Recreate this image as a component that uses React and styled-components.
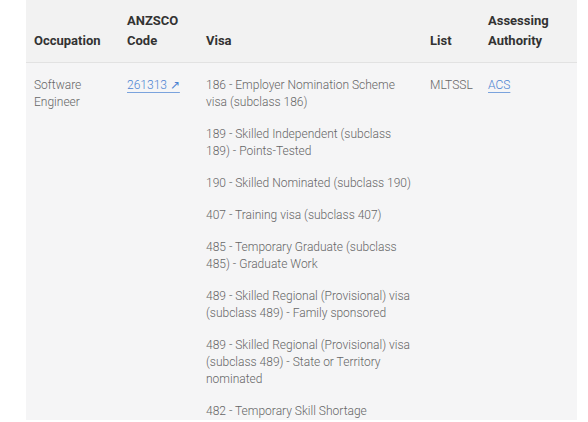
import React from "react";
import styled, { createGlobalStyle } from "styled-components";

const Global = createGlobalStyle`
  html, body { margin: 0; padding: 0; background: #fff; }
  body { font-family: Roboto, "Noto Sans", sans-serif; }
`;

const Page = styled.div`
  padding-left: 26px;
  width: 551px;
  height: 422px;
  overflow: hidden;
`;

const Table = styled.table`
  width: 551px;
  border-collapse: collapse;
  table-layout: fixed;
  background: #f5f5f6;
`;

const Head = styled.thead`
  background: #f2f2f2;
`;

const Th = styled.th`
  text-align: left;
  vertical-align: bottom;
  padding: 0 8px 11px 8px;
  font-size: 13px;
  font-weight: 700;
  line-height: 20px;
  color: #333;
  border-bottom: 1px solid #e2e2e2;
  height: 51px;
`;

const Td = styled.td`
  vertical-align: top;
  padding: 14px 8px 0 8px;
  font-size: 12px;
  font-weight: 300;
  line-height: 17px;
  color: #666;
`;

const Link = styled.a`
  color: #4d84d2;
  text-decoration: underline;
  text-decoration-color: #7aa3dd;
  text-underline-offset: 3px;
`;

const VisaList = styled.div`
  display: flex;
  flex-direction: column;
  gap: 15px;
`;

const Visa = styled.div``;

const visas = [
  "186 - Employer Nomination Scheme visa (subclass 186)",
  "189 - Skilled Independent (subclass 189) - Points-Tested",
  "190 - Skilled Nominated (subclass 190)",
  "407 - Training visa (subclass 407)",
  "485 - Temporary Graduate (subclass 485) - Graduate Work",
  "489 - Skilled Regional (Provisional) visa (subclass 489) - Family sponsored",
  "489 - Skilled Regional (Provisional) visa (subclass 489) - State or Territory nominated",
  "482 - Temporary Skill Shortage",
];

export default function App() {
  return (
    <Page>
      <Global />
      <Table>
        <colgroup>
          <col style={{ width: 93 }} />
          <col style={{ width: 79 }} />
          <col style={{ width: 224 }} />
          <col style={{ width: 58 }} />
          <col style={{ width: 97 }} />
        </colgroup>
        <Head>
          <tr>
            <Th>Occupation</Th>
            <Th>ANZSCO Code</Th>
            <Th>Visa</Th>
            <Th>List</Th>
            <Th>Assessing Authority</Th>
          </tr>
        </Head>
        <tbody>
          <tr>
            <Td>Software Engineer</Td>
            <Td>
              <Link href="#">261313 ↗</Link>
            </Td>
            <Td>
              <VisaList>
                {visas.map((v) => (
                  <Visa key={v}>{v}</Visa>
                ))}
              </VisaList>
            </Td>
            <Td>MLTSSL</Td>
            <Td>
              <Link href="#">ACS</Link>
            </Td>
          </tr>
        </tbody>
      </Table>
    </Page>
  );
}
